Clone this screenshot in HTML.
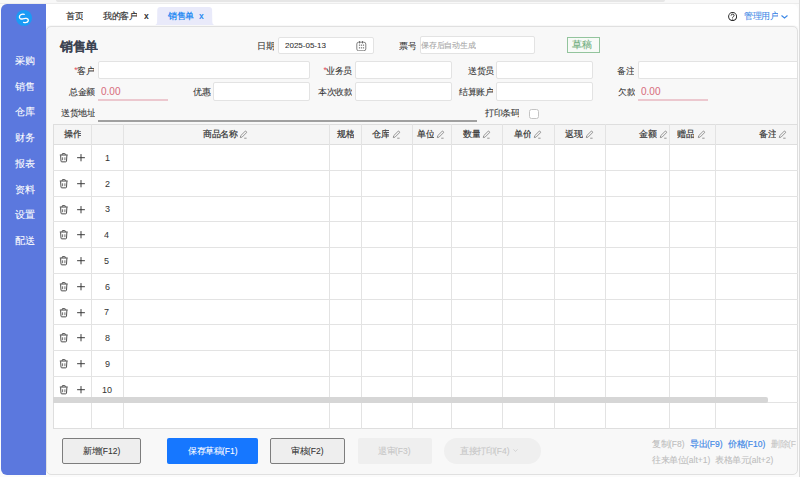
<!DOCTYPE html>
<html><head><meta charset="utf-8">
<style>
*{box-sizing:border-box;margin:0;padding:0}
html,body{width:800px;height:477px;overflow:hidden;background:#fbfbfb;font-family:"Liberation Sans",sans-serif;color:#333}
.a{position:absolute}
.t{position:absolute;white-space:nowrap;line-height:1;transform:scale(0.25);transform-origin:0 0}
.hl{height:1px;background:#e3e3e3}
.vl{width:1px;background:#e3e3e3}
.ic{line-height:0}
.inp{position:absolute;background:#fff;border:1px solid #e3e3e3;border-radius:2px}
.btn{position:absolute;top:437.9px;height:25.9px}
.b1{background:#eeeeee;border:1px solid #7d7d7d;border-radius:2px}
</style></head>
<body>
<div class="a" style="left:0;top:0;width:800px;height:4px;background:#f8f8f8;border-bottom:1px solid #ececec"></div>
<div class="a" style="left:56px;top:0;width:609px;height:2px;background:#e6e6e6;border-radius:0 0 2px 2px"></div>
<div class="a" style="left:1px;top:3.9px;width:45px;height:471px;background:#5b78de;border-radius:6px 0 0 6px"></div>
<div class="a" style="left:15.6px;top:10px;width:16.2px;height:16.2px;border-radius:50%;background:#1a9bf5"></div>
<svg class="a" style="left:15.6px;top:10px" width="16.2" height="16.2" viewBox="0 0 16.2 16.2"><path d="M8.2 4.3 C5.5 3.7 3.2 5.2 3.4 7.2 C3.6 8.9 5.2 9.3 6.8 8.9 L9.6 8.4 C11.4 8.1 12.7 9.3 12.2 11 C11.8 12.4 10.3 12.9 7.6 12.4" fill="none" stroke="#fff" stroke-width="1.35" stroke-linecap="round"/></svg>
<div class="a" style="left:46px;top:4px;width:752px;height:22.2px;background:#fff;border-radius:0 6px 0 0"></div>
<div class="a" style="left:799px;top:0;width:1px;height:477px;background:#dcdcdc"></div>
<svg class="a" style="left:150px;top:0" width="70" height="27" viewBox="0 0 70 27"><path d="M5.4 25 Q7 24.6 7.1 22 L7.3 10 Q7.4 7 10.4 7 L59 7 Q62 7 62.1 10 L62.3 22 Q62.4 24.6 64.2 25 Z" fill="#e9eafa"/></svg>
<svg class="a" style="left:728px;top:11.6px" width="9.2" height="9.2" viewBox="0 0 10 10"><circle cx="5" cy="5" r="4.35" fill="none" stroke="#2b2b2b" stroke-width="1.1"/><path d="M3.4 3.9 Q3.4 2.4 5 2.4 Q6.6 2.4 6.6 3.8 Q6.6 4.7 5.6 5.1 Q5 5.4 5 6.2" fill="none" stroke="#2b2b2b" stroke-width="1.05"/><circle cx="5" cy="7.6" r="0.65" fill="#2b2b2b"/></svg>
<svg class="a" style="left:781px;top:15px" width="7" height="3.5" viewBox="0 0 7 3.5"><path d="M0.5 0.5 L3.5 3 L6.5 0.5" fill="none" stroke="#3b87e6" stroke-width="1.1"/></svg>
<div class="a" style="left:46px;top:26.2px;width:752px;height:448.8px;background:#f8f8f8;border:1px solid #e0e0e0;border-radius:5px;box-shadow:0 -1px 1px rgba(0,0,0,0.03)"></div>

<div class="inp" style="left:278.2px;top:36.6px;width:96px;height:17.6px"></div>
<svg class="a" style="left:356px;top:40.5px" width="10.5" height="10.5" viewBox="0 0 10.5 10.5"><rect x="0.8" y="1.2" width="9" height="8.6" rx="1.9" fill="none" stroke="#7a7a7a" stroke-width="0.95"/><path d="M3.6 0.1 V2.4 M6.5 0.1 V2.4" stroke="#666" stroke-width="1"/><g fill="#666"><rect x="2.9" y="3.6" width="1.2" height="1.1"/><rect x="4.9" y="3.6" width="1.2" height="1.1"/><rect x="6.9" y="3.6" width="1.2" height="1.1"/><rect x="2.9" y="6.3" width="1.2" height="1.1"/><rect x="4.9" y="6.3" width="1.2" height="1.1"/><rect x="6.9" y="6.3" width="1.2" height="1.1"/></g></svg>
<div class="inp" style="left:419.5px;top:36.2px;width:115.5px;height:18px"></div>
<div class="a" style="left:566.9px;top:37.1px;width:33.1px;height:15.9px;border:1.2px solid #93c49d;background:#f7faf7"></div>

<div class="inp" style="left:97.8px;top:61px;width:211.9px;height:17.6px"></div>
<div class="inp" style="left:355.2px;top:61px;width:96.8px;height:17.6px"></div>
<div class="inp" style="left:496.2px;top:61px;width:96.8px;height:17.6px"></div>
<div class="inp" style="left:638px;top:61px;width:159px;height:17.6px;border-right:none;border-radius:2px 0 0 2px"></div>
<div class="inp" style="left:213.3px;top:82.3px;width:96.4px;height:18.3px"></div>
<div class="inp" style="left:355.2px;top:82.3px;width:96.8px;height:18.3px"></div>
<div class="inp" style="left:496.2px;top:82.3px;width:96.8px;height:18.3px"></div>
<div class="a" style="left:97.6px;top:99.3px;width:70.8px;height:1.4px;background:#ecc8cf"></div>
<div class="a" style="left:638px;top:99.3px;width:70px;height:1.4px;background:#ecc8cf"></div>
<div class="a" style="left:97.9px;top:120.2px;width:379.1px;height:1.6px;background:#a0a0a0"></div>
<div class="a" style="left:529.2px;top:109.2px;width:9.4px;height:9.4px;border:1px solid #c4c4c4;border-radius:2.5px;background:#fff"></div>
<div class="a" style="left:74.3px;top:65.9px;font-size:8.6px;color:#e04a5a;line-height:8px">*</div>
<div class="a" style="left:323.4px;top:65.9px;font-size:8.6px;color:#e04a5a;line-height:8px">*</div>

<div class="a" style="left:53px;top:124.4px;width:744.6px;height:304.6px;background:#fff;border:1px solid #dedede"></div>
<div class="a" style="left:53px;top:124.4px;width:744.6px;height:20.5px;background:#f5f5f5;border:1px solid #dedede"></div>
<div class="a hl" style="top:170px;left:53px;width:744.6px"></div>
<div class="a hl" style="top:196px;left:53px;width:744.6px"></div>
<div class="a hl" style="top:221px;left:53px;width:744.6px"></div>
<div class="a hl" style="top:247px;left:53px;width:744.6px"></div>
<div class="a hl" style="top:273px;left:53px;width:744.6px"></div>
<div class="a hl" style="top:299px;left:53px;width:744.6px"></div>
<div class="a hl" style="top:324px;left:53px;width:744.6px"></div>
<div class="a hl" style="top:350px;left:53px;width:744.6px"></div>
<div class="a hl" style="top:376px;left:53px;width:744.6px"></div>
<div class="a hl" style="top:402px;left:53px;width:744.6px"></div>
<div class="a vl" style="left:91px;top:124.4px;height:304.6px"></div>
<div class="a vl" style="left:123px;top:124.4px;height:304.6px"></div>
<div class="a vl" style="left:329px;top:124.4px;height:304.6px"></div>
<div class="a vl" style="left:361px;top:124.4px;height:304.6px"></div>
<div class="a vl" style="left:412px;top:124.4px;height:304.6px"></div>
<div class="a vl" style="left:451px;top:124.4px;height:304.6px"></div>
<div class="a vl" style="left:502px;top:124.4px;height:304.6px"></div>
<div class="a vl" style="left:554px;top:124.4px;height:304.6px"></div>
<div class="a vl" style="left:605px;top:124.4px;height:304.6px"></div>
<div class="a vl" style="left:669px;top:124.4px;height:304.6px"></div>
<div class="a vl" style="left:715px;top:124.4px;height:304.6px"></div>
<div class="a ic" style="left:238.90px;top:130.3px"><svg width="9" height="9" viewBox="0 0 9 9"><path d="M1.3 7.6 L1.7 5.7 L5.9 1.5 Q6.6 0.8 7.3 1.5 Q8 2.2 7.3 2.9 L3.1 7.1 Z" fill="none" stroke="#777" stroke-width="0.75" stroke-linejoin="round"/><path d="M5.2 8.2 H7.6" stroke="#777" stroke-width="0.75"/></svg></div>
<div class="a ic" style="left:391.90px;top:130.3px"><svg width="9" height="9" viewBox="0 0 9 9"><path d="M1.3 7.6 L1.7 5.7 L5.9 1.5 Q6.6 0.8 7.3 1.5 Q8 2.2 7.3 2.9 L3.1 7.1 Z" fill="none" stroke="#777" stroke-width="0.75" stroke-linejoin="round"/><path d="M5.2 8.2 H7.6" stroke="#777" stroke-width="0.75"/></svg></div>
<div class="a ic" style="left:435.90px;top:130.3px"><svg width="9" height="9" viewBox="0 0 9 9"><path d="M1.3 7.6 L1.7 5.7 L5.9 1.5 Q6.6 0.8 7.3 1.5 Q8 2.2 7.3 2.9 L3.1 7.1 Z" fill="none" stroke="#777" stroke-width="0.75" stroke-linejoin="round"/><path d="M5.2 8.2 H7.6" stroke="#777" stroke-width="0.75"/></svg></div>
<div class="a ic" style="left:481.90px;top:130.3px"><svg width="9" height="9" viewBox="0 0 9 9"><path d="M1.3 7.6 L1.7 5.7 L5.9 1.5 Q6.6 0.8 7.3 1.5 Q8 2.2 7.3 2.9 L3.1 7.1 Z" fill="none" stroke="#777" stroke-width="0.75" stroke-linejoin="round"/><path d="M5.2 8.2 H7.6" stroke="#777" stroke-width="0.75"/></svg></div>
<div class="a ic" style="left:532.90px;top:130.3px"><svg width="9" height="9" viewBox="0 0 9 9"><path d="M1.3 7.6 L1.7 5.7 L5.9 1.5 Q6.6 0.8 7.3 1.5 Q8 2.2 7.3 2.9 L3.1 7.1 Z" fill="none" stroke="#777" stroke-width="0.75" stroke-linejoin="round"/><path d="M5.2 8.2 H7.6" stroke="#777" stroke-width="0.75"/></svg></div>
<div class="a ic" style="left:584.90px;top:130.3px"><svg width="9" height="9" viewBox="0 0 9 9"><path d="M1.3 7.6 L1.7 5.7 L5.9 1.5 Q6.6 0.8 7.3 1.5 Q8 2.2 7.3 2.9 L3.1 7.1 Z" fill="none" stroke="#777" stroke-width="0.75" stroke-linejoin="round"/><path d="M5.2 8.2 H7.6" stroke="#777" stroke-width="0.75"/></svg></div>
<div class="a ic" style="left:658.90px;top:130.3px"><svg width="9" height="9" viewBox="0 0 9 9"><path d="M1.3 7.6 L1.7 5.7 L5.9 1.5 Q6.6 0.8 7.3 1.5 Q8 2.2 7.3 2.9 L3.1 7.1 Z" fill="none" stroke="#777" stroke-width="0.75" stroke-linejoin="round"/><path d="M5.2 8.2 H7.6" stroke="#777" stroke-width="0.75"/></svg></div>
<div class="a ic" style="left:696.90px;top:130.3px"><svg width="9" height="9" viewBox="0 0 9 9"><path d="M1.3 7.6 L1.7 5.7 L5.9 1.5 Q6.6 0.8 7.3 1.5 Q8 2.2 7.3 2.9 L3.1 7.1 Z" fill="none" stroke="#777" stroke-width="0.75" stroke-linejoin="round"/><path d="M5.2 8.2 H7.6" stroke="#777" stroke-width="0.75"/></svg></div>
<div class="a ic" style="left:777.90px;top:130.3px"><svg width="9" height="9" viewBox="0 0 9 9"><path d="M1.3 7.6 L1.7 5.7 L5.9 1.5 Q6.6 0.8 7.3 1.5 Q8 2.2 7.3 2.9 L3.1 7.1 Z" fill="none" stroke="#777" stroke-width="0.75" stroke-linejoin="round"/><path d="M5.2 8.2 H7.6" stroke="#777" stroke-width="0.75"/></svg></div>
<div class="a ic" style="left:58.5px;top:153.20px"><svg width="9.5" height="10" viewBox="0 0 9.5 10"><path d="M0.8 2 H8.7" stroke="#444" stroke-width="1"/><path d="M3.2 1.9 V1.2 Q3.2 0.45 4 0.45 H5.5 Q6.3 0.45 6.3 1.2 V1.9" fill="none" stroke="#444" stroke-width="0.9"/><path d="M1.6 2.3 L2 8.1 Q2.1 8.85 2.85 8.85 H6.65 Q7.4 8.85 7.5 8.1 L7.9 2.3" fill="none" stroke="#444" stroke-width="0.95"/><path d="M3.6 4.3 V7.2 M5.9 4.3 V7.2" stroke="#555" stroke-width="0.85"/></svg></div>
<div class="a ic" style="left:77px;top:154.20px"><svg width="8" height="8" viewBox="0 0 8 8"><path d="M4 0.1 V7.3 M0.1 3.7 H7.9" stroke="#333" stroke-width="0.95"/></svg></div>
<div class="a ic" style="left:58.5px;top:178.95px"><svg width="9.5" height="10" viewBox="0 0 9.5 10"><path d="M0.8 2 H8.7" stroke="#444" stroke-width="1"/><path d="M3.2 1.9 V1.2 Q3.2 0.45 4 0.45 H5.5 Q6.3 0.45 6.3 1.2 V1.9" fill="none" stroke="#444" stroke-width="0.9"/><path d="M1.6 2.3 L2 8.1 Q2.1 8.85 2.85 8.85 H6.65 Q7.4 8.85 7.5 8.1 L7.9 2.3" fill="none" stroke="#444" stroke-width="0.95"/><path d="M3.6 4.3 V7.2 M5.9 4.3 V7.2" stroke="#555" stroke-width="0.85"/></svg></div>
<div class="a ic" style="left:77px;top:179.95px"><svg width="8" height="8" viewBox="0 0 8 8"><path d="M4 0.1 V7.3 M0.1 3.7 H7.9" stroke="#333" stroke-width="0.95"/></svg></div>
<div class="a ic" style="left:58.5px;top:204.70px"><svg width="9.5" height="10" viewBox="0 0 9.5 10"><path d="M0.8 2 H8.7" stroke="#444" stroke-width="1"/><path d="M3.2 1.9 V1.2 Q3.2 0.45 4 0.45 H5.5 Q6.3 0.45 6.3 1.2 V1.9" fill="none" stroke="#444" stroke-width="0.9"/><path d="M1.6 2.3 L2 8.1 Q2.1 8.85 2.85 8.85 H6.65 Q7.4 8.85 7.5 8.1 L7.9 2.3" fill="none" stroke="#444" stroke-width="0.95"/><path d="M3.6 4.3 V7.2 M5.9 4.3 V7.2" stroke="#555" stroke-width="0.85"/></svg></div>
<div class="a ic" style="left:77px;top:205.70px"><svg width="8" height="8" viewBox="0 0 8 8"><path d="M4 0.1 V7.3 M0.1 3.7 H7.9" stroke="#333" stroke-width="0.95"/></svg></div>
<div class="a ic" style="left:58.5px;top:230.45px"><svg width="9.5" height="10" viewBox="0 0 9.5 10"><path d="M0.8 2 H8.7" stroke="#444" stroke-width="1"/><path d="M3.2 1.9 V1.2 Q3.2 0.45 4 0.45 H5.5 Q6.3 0.45 6.3 1.2 V1.9" fill="none" stroke="#444" stroke-width="0.9"/><path d="M1.6 2.3 L2 8.1 Q2.1 8.85 2.85 8.85 H6.65 Q7.4 8.85 7.5 8.1 L7.9 2.3" fill="none" stroke="#444" stroke-width="0.95"/><path d="M3.6 4.3 V7.2 M5.9 4.3 V7.2" stroke="#555" stroke-width="0.85"/></svg></div>
<div class="a ic" style="left:77px;top:231.45px"><svg width="8" height="8" viewBox="0 0 8 8"><path d="M4 0.1 V7.3 M0.1 3.7 H7.9" stroke="#333" stroke-width="0.95"/></svg></div>
<div class="a ic" style="left:58.5px;top:256.20px"><svg width="9.5" height="10" viewBox="0 0 9.5 10"><path d="M0.8 2 H8.7" stroke="#444" stroke-width="1"/><path d="M3.2 1.9 V1.2 Q3.2 0.45 4 0.45 H5.5 Q6.3 0.45 6.3 1.2 V1.9" fill="none" stroke="#444" stroke-width="0.9"/><path d="M1.6 2.3 L2 8.1 Q2.1 8.85 2.85 8.85 H6.65 Q7.4 8.85 7.5 8.1 L7.9 2.3" fill="none" stroke="#444" stroke-width="0.95"/><path d="M3.6 4.3 V7.2 M5.9 4.3 V7.2" stroke="#555" stroke-width="0.85"/></svg></div>
<div class="a ic" style="left:77px;top:257.20px"><svg width="8" height="8" viewBox="0 0 8 8"><path d="M4 0.1 V7.3 M0.1 3.7 H7.9" stroke="#333" stroke-width="0.95"/></svg></div>
<div class="a ic" style="left:58.5px;top:281.95px"><svg width="9.5" height="10" viewBox="0 0 9.5 10"><path d="M0.8 2 H8.7" stroke="#444" stroke-width="1"/><path d="M3.2 1.9 V1.2 Q3.2 0.45 4 0.45 H5.5 Q6.3 0.45 6.3 1.2 V1.9" fill="none" stroke="#444" stroke-width="0.9"/><path d="M1.6 2.3 L2 8.1 Q2.1 8.85 2.85 8.85 H6.65 Q7.4 8.85 7.5 8.1 L7.9 2.3" fill="none" stroke="#444" stroke-width="0.95"/><path d="M3.6 4.3 V7.2 M5.9 4.3 V7.2" stroke="#555" stroke-width="0.85"/></svg></div>
<div class="a ic" style="left:77px;top:282.95px"><svg width="8" height="8" viewBox="0 0 8 8"><path d="M4 0.1 V7.3 M0.1 3.7 H7.9" stroke="#333" stroke-width="0.95"/></svg></div>
<div class="a ic" style="left:58.5px;top:307.70px"><svg width="9.5" height="10" viewBox="0 0 9.5 10"><path d="M0.8 2 H8.7" stroke="#444" stroke-width="1"/><path d="M3.2 1.9 V1.2 Q3.2 0.45 4 0.45 H5.5 Q6.3 0.45 6.3 1.2 V1.9" fill="none" stroke="#444" stroke-width="0.9"/><path d="M1.6 2.3 L2 8.1 Q2.1 8.85 2.85 8.85 H6.65 Q7.4 8.85 7.5 8.1 L7.9 2.3" fill="none" stroke="#444" stroke-width="0.95"/><path d="M3.6 4.3 V7.2 M5.9 4.3 V7.2" stroke="#555" stroke-width="0.85"/></svg></div>
<div class="a ic" style="left:77px;top:308.70px"><svg width="8" height="8" viewBox="0 0 8 8"><path d="M4 0.1 V7.3 M0.1 3.7 H7.9" stroke="#333" stroke-width="0.95"/></svg></div>
<div class="a ic" style="left:58.5px;top:333.45px"><svg width="9.5" height="10" viewBox="0 0 9.5 10"><path d="M0.8 2 H8.7" stroke="#444" stroke-width="1"/><path d="M3.2 1.9 V1.2 Q3.2 0.45 4 0.45 H5.5 Q6.3 0.45 6.3 1.2 V1.9" fill="none" stroke="#444" stroke-width="0.9"/><path d="M1.6 2.3 L2 8.1 Q2.1 8.85 2.85 8.85 H6.65 Q7.4 8.85 7.5 8.1 L7.9 2.3" fill="none" stroke="#444" stroke-width="0.95"/><path d="M3.6 4.3 V7.2 M5.9 4.3 V7.2" stroke="#555" stroke-width="0.85"/></svg></div>
<div class="a ic" style="left:77px;top:334.45px"><svg width="8" height="8" viewBox="0 0 8 8"><path d="M4 0.1 V7.3 M0.1 3.7 H7.9" stroke="#333" stroke-width="0.95"/></svg></div>
<div class="a ic" style="left:58.5px;top:359.20px"><svg width="9.5" height="10" viewBox="0 0 9.5 10"><path d="M0.8 2 H8.7" stroke="#444" stroke-width="1"/><path d="M3.2 1.9 V1.2 Q3.2 0.45 4 0.45 H5.5 Q6.3 0.45 6.3 1.2 V1.9" fill="none" stroke="#444" stroke-width="0.9"/><path d="M1.6 2.3 L2 8.1 Q2.1 8.85 2.85 8.85 H6.65 Q7.4 8.85 7.5 8.1 L7.9 2.3" fill="none" stroke="#444" stroke-width="0.95"/><path d="M3.6 4.3 V7.2 M5.9 4.3 V7.2" stroke="#555" stroke-width="0.85"/></svg></div>
<div class="a ic" style="left:77px;top:360.20px"><svg width="8" height="8" viewBox="0 0 8 8"><path d="M4 0.1 V7.3 M0.1 3.7 H7.9" stroke="#333" stroke-width="0.95"/></svg></div>
<div class="a ic" style="left:58.5px;top:384.95px"><svg width="9.5" height="10" viewBox="0 0 9.5 10"><path d="M0.8 2 H8.7" stroke="#444" stroke-width="1"/><path d="M3.2 1.9 V1.2 Q3.2 0.45 4 0.45 H5.5 Q6.3 0.45 6.3 1.2 V1.9" fill="none" stroke="#444" stroke-width="0.9"/><path d="M1.6 2.3 L2 8.1 Q2.1 8.85 2.85 8.85 H6.65 Q7.4 8.85 7.5 8.1 L7.9 2.3" fill="none" stroke="#444" stroke-width="0.95"/><path d="M3.6 4.3 V7.2 M5.9 4.3 V7.2" stroke="#555" stroke-width="0.85"/></svg></div>
<div class="a ic" style="left:77px;top:385.95px"><svg width="8" height="8" viewBox="0 0 8 8"><path d="M4 0.1 V7.3 M0.1 3.7 H7.9" stroke="#333" stroke-width="0.95"/></svg></div>
<div class="a" style="left:53.4px;top:397px;width:714.3px;height:5.5px;background:#d6d6d6;border-radius:0 2px 2px 0"></div>

<div class="btn b1" style="left:62.3px;width:78.9px"></div>
<div class="btn" style="left:166.7px;width:91px;background:#1677ff;border-radius:2px"></div>
<div class="btn b1" style="left:270px;width:75px"></div>
<div class="btn" style="left:357.9px;width:73.7px;background:#efefef;border-radius:2px"></div>
<div class="btn" style="left:444px;width:96.8px;background:#efefef;border-radius:13px"></div>
<svg class="a" style="left:512.5px;top:449px" width="5" height="3" viewBox="0 0 5 3"><path d="M0.4 0.4 L2.5 2.4 L4.6 0.4" fill="none" stroke="#c9c9c9" stroke-width="0.7"/></svg>
<div class="a" style="left:0;top:0;width:795.5px;height:477px;overflow:hidden">
<div id="t_tab_home" class="t" style="left:66.10px;top:11.96px;font-size:34.00px;font-weight:normal;color:#333;-webkit-text-stroke:0.7px #333">首页</div>
<div id="t_tab_cust" class="t" style="left:103.49px;top:11.96px;font-size:34.00px;font-weight:normal;color:#333;-webkit-text-stroke:0.7px #333">我的客户</div>
<div id="t_tab_cust_x" class="t" style="left:143.54px;top:12.16px;font-size:34.00px;font-weight:bold;color:#333;-webkit-text-stroke:0.0px #333">x</div>
<div id="t_tab_sale" class="t" style="left:168.27px;top:11.96px;font-size:34.00px;font-weight:bold;color:#2a8bf2;-webkit-text-stroke:0.0px #2a8bf2">销售单</div>
<div id="t_tab_sale_x" class="t" style="left:198.81px;top:12.16px;font-size:34.00px;font-weight:bold;color:#2d8cf0;-webkit-text-stroke:0.0px #2d8cf0">x</div>
<div id="t_user" class="t" style="left:743.61px;top:12.42px;font-size:34.00px;font-weight:normal;color:#3b87e6;-webkit-text-stroke:0.3px #3b87e6">管理用户</div>
<div id="t_title" class="t" style="left:60.09px;top:39.67px;font-size:50.00px;font-weight:bold;color:#3b4251;-webkit-text-stroke:0.7px #3b4251">销售单</div>
<div id="t_l_date" class="t" style="left:257.33px;top:41.85px;font-size:34.00px;font-weight:normal;color:#333;-webkit-text-stroke:0.3px #333">日期</div>
<div id="t_v_date" class="t" style="left:284.60px;top:40.79px;font-size:32.00px;font-weight:normal;color:#333;-webkit-text-stroke:0.3px #333">2025-05-13</div>
<div id="t_l_no" class="t" style="left:399.19px;top:41.85px;font-size:34.00px;font-weight:normal;color:#333;-webkit-text-stroke:0.3px #333">票号</div>
<div id="t_ph" class="t" style="left:421.30px;top:40.75px;font-size:31.00px;font-weight:normal;color:#a6a6a6;-webkit-text-stroke:0.3px #a6a6a6">保存后自动生成</div>
<div id="t_draft" class="t" style="left:572.42px;top:39.36px;font-size:40.00px;font-weight:normal;color:#6dab79;-webkit-text-stroke:0.3px #6dab79">草稿</div>
<div id="t_l_cust" class="t" style="left:77.22px;top:66.55px;font-size:34.00px;font-weight:normal;color:#333;-webkit-text-stroke:0.3px #333">客户</div>
<div id="t_l_sales" class="t" style="left:325.58px;top:66.55px;font-size:34.00px;font-weight:normal;color:#333;-webkit-text-stroke:0.3px #333">业务员</div>
<div id="t_l_deliv" class="t" style="left:467.70px;top:66.55px;font-size:34.00px;font-weight:normal;color:#333;-webkit-text-stroke:0.3px #333">送货员</div>
<div id="t_l_note" class="t" style="left:617.32px;top:66.55px;font-size:34.00px;font-weight:normal;color:#333;-webkit-text-stroke:0.3px #333">备注</div>
<div id="t_l_total" class="t" style="left:69.28px;top:87.55px;font-size:34.00px;font-weight:normal;color:#333;-webkit-text-stroke:0.3px #333">总金额</div>
<div id="t_v_total" class="t" style="left:100.94px;top:85.50px;font-size:40.00px;font-weight:normal;color:#d8707f;-webkit-text-stroke:0.3px #d8707f">0.00</div>
<div id="t_l_disc" class="t" style="left:193.03px;top:87.55px;font-size:34.00px;font-weight:normal;color:#333;-webkit-text-stroke:0.3px #333">优惠</div>
<div id="t_l_recv" class="t" style="left:317.90px;top:87.55px;font-size:34.00px;font-weight:normal;color:#333;-webkit-text-stroke:0.3px #333">本次收款</div>
<div id="t_l_acct" class="t" style="left:458.91px;top:87.55px;font-size:34.00px;font-weight:normal;color:#333;-webkit-text-stroke:0.3px #333">结算账户</div>
<div id="t_l_owe" class="t" style="left:617.75px;top:87.55px;font-size:34.00px;font-weight:normal;color:#333;-webkit-text-stroke:0.3px #333">欠款</div>
<div id="t_v_owe" class="t" style="left:640.94px;top:85.50px;font-size:40.00px;font-weight:normal;color:#d8707f;-webkit-text-stroke:0.3px #d8707f">0.00</div>
<div id="t_l_addr" class="t" style="left:60.82px;top:108.88px;font-size:34.00px;font-weight:normal;color:#333;-webkit-text-stroke:0.3px #333">送货地址</div>
<div id="t_l_print" class="t" style="left:485.17px;top:109.19px;font-size:34.00px;font-weight:normal;color:#333;-webkit-text-stroke:0.3px #333">打印条码</div>
<div id="t_b_new" class="t" style="left:82.58px;top:446.77px;font-size:34.00px;font-weight:normal;color:#333;-webkit-text-stroke:0.3px #333">新增(F12)</div>
<div id="t_b_save" class="t" style="left:188.02px;top:446.77px;font-size:34.00px;font-weight:normal;color:#fff;-webkit-text-stroke:0.3px #fff">保存草稿(F1)</div>
<div id="t_b_audit" class="t" style="left:291.30px;top:446.77px;font-size:34.00px;font-weight:normal;color:#333;-webkit-text-stroke:0.3px #333">审核(F2)</div>
<div id="t_b_unaudit" class="t" style="left:378.33px;top:446.77px;font-size:34.00px;font-weight:normal;color:#c6c6c6;-webkit-text-stroke:0.3px #c6c6c6">退审(F3)</div>
<div id="t_b_print" class="t" style="left:459.51px;top:446.77px;font-size:34.00px;font-weight:normal;color:#c6c6c6;-webkit-text-stroke:0.3px #c6c6c6">直接打印(F4)</div>
<div id="t_k_copy" class="t" style="left:651.78px;top:440.21px;font-size:34.00px;font-weight:normal;color:#bdbdbd;-webkit-text-stroke:0.3px #bdbdbd">复制(F8)</div>
<div id="t_k_exp" class="t" style="left:690.00px;top:440.21px;font-size:34.00px;font-weight:normal;color:#3f88e6;-webkit-text-stroke:0.7px #3f88e6">导出(F9)</div>
<div id="t_k_price" class="t" style="left:728.49px;top:440.21px;font-size:34.00px;font-weight:normal;color:#3f88e6;-webkit-text-stroke:0.7px #3f88e6">价格(F10)</div>
<div id="t_k_del" class="t" style="left:771.40px;top:440.21px;font-size:34.00px;font-weight:normal;color:#c6c6c6;-webkit-text-stroke:0.3px #c6c6c6">删除(F8)</div>
<div id="t_k_unit" class="t" style="left:651.64px;top:456.26px;font-size:34.00px;font-weight:normal;color:#bdbdbd;-webkit-text-stroke:0.3px #bdbdbd">往来单位(alt+1)</div>
<div id="t_k_cell" class="t" style="left:714.92px;top:456.26px;font-size:34.00px;font-weight:normal;color:#bdbdbd;-webkit-text-stroke:0.3px #bdbdbd">表格单元(alt+2)</div>
<div id="t_menu0" class="t" style="left:15.45px;top:55.05px;font-size:41.00px;font-weight:normal;color:#fff;-webkit-text-stroke:0.3px #fff">采购</div>
<div id="t_menu1" class="t" style="left:15.45px;top:80.77px;font-size:41.00px;font-weight:normal;color:#fff;-webkit-text-stroke:0.3px #fff">销售</div>
<div id="t_menu2" class="t" style="left:15.45px;top:106.49px;font-size:41.00px;font-weight:normal;color:#fff;-webkit-text-stroke:0.3px #fff">仓库</div>
<div id="t_menu3" class="t" style="left:15.45px;top:132.21px;font-size:41.00px;font-weight:normal;color:#fff;-webkit-text-stroke:0.3px #fff">财务</div>
<div id="t_menu4" class="t" style="left:15.45px;top:157.93px;font-size:41.00px;font-weight:normal;color:#fff;-webkit-text-stroke:0.3px #fff">报表</div>
<div id="t_menu5" class="t" style="left:15.45px;top:183.65px;font-size:41.00px;font-weight:normal;color:#fff;-webkit-text-stroke:0.3px #fff">资料</div>
<div id="t_menu6" class="t" style="left:15.45px;top:209.37px;font-size:41.00px;font-weight:normal;color:#fff;-webkit-text-stroke:0.3px #fff">设置</div>
<div id="t_menu7" class="t" style="left:15.45px;top:235.09px;font-size:41.00px;font-weight:normal;color:#fff;-webkit-text-stroke:0.3px #fff">配送</div>
<div id="t_th0" class="t" style="left:63.70px;top:130.42px;font-size:34.00px;font-weight:normal;color:#333;-webkit-text-stroke:0.7px #333">操作</div>
<div id="t_th1" class="t" style="left:202.62px;top:130.42px;font-size:34.00px;font-weight:normal;color:#333;-webkit-text-stroke:0.7px #333">商品名称</div>
<div id="t_th2" class="t" style="left:337.09px;top:130.42px;font-size:34.00px;font-weight:normal;color:#333;-webkit-text-stroke:0.7px #333">规格</div>
<div id="t_th3" class="t" style="left:372.22px;top:130.42px;font-size:34.00px;font-weight:normal;color:#333;-webkit-text-stroke:0.7px #333">仓库</div>
<div id="t_th4" class="t" style="left:417.15px;top:130.42px;font-size:34.00px;font-weight:normal;color:#333;-webkit-text-stroke:0.7px #333">单位</div>
<div id="t_th5" class="t" style="left:462.65px;top:130.42px;font-size:34.00px;font-weight:normal;color:#333;-webkit-text-stroke:0.7px #333">数量</div>
<div id="t_th6" class="t" style="left:513.53px;top:130.42px;font-size:34.00px;font-weight:normal;color:#333;-webkit-text-stroke:0.7px #333">单价</div>
<div id="t_th7" class="t" style="left:564.62px;top:130.42px;font-size:34.00px;font-weight:normal;color:#333;-webkit-text-stroke:0.7px #333">返现</div>
<div id="t_th8" class="t" style="left:638.77px;top:130.42px;font-size:34.00px;font-weight:normal;color:#333;-webkit-text-stroke:0.7px #333">金额</div>
<div id="t_th9" class="t" style="left:677.30px;top:130.42px;font-size:34.00px;font-weight:normal;color:#333;-webkit-text-stroke:0.7px #333">赠品</div>
<div id="t_th10" class="t" style="left:758.60px;top:130.42px;font-size:34.00px;font-weight:normal;color:#333;-webkit-text-stroke:0.7px #333">备注</div>
<div id="t_rn0" class="t" style="left:104.72px;top:152.90px;font-size:36.00px;font-weight:normal;color:#333;-webkit-text-stroke:0.0px #333">1</div>
<div id="t_rn1" class="t" style="left:105.02px;top:178.65px;font-size:36.00px;font-weight:normal;color:#333;-webkit-text-stroke:0.0px #333">2</div>
<div id="t_rn2" class="t" style="left:104.71px;top:204.40px;font-size:36.00px;font-weight:normal;color:#333;-webkit-text-stroke:0.0px #333">3</div>
<div id="t_rn3" class="t" style="left:104.43px;top:230.15px;font-size:36.00px;font-weight:normal;color:#333;-webkit-text-stroke:0.0px #333">4</div>
<div id="t_rn4" class="t" style="left:104.44px;top:255.90px;font-size:36.00px;font-weight:normal;color:#333;-webkit-text-stroke:0.0px #333">5</div>
<div id="t_rn5" class="t" style="left:104.76px;top:281.65px;font-size:36.00px;font-weight:normal;color:#333;-webkit-text-stroke:0.0px #333">6</div>
<div id="t_rn6" class="t" style="left:104.21px;top:307.40px;font-size:36.00px;font-weight:normal;color:#333;-webkit-text-stroke:0.0px #333">7</div>
<div id="t_rn7" class="t" style="left:104.68px;top:333.15px;font-size:36.00px;font-weight:normal;color:#333;-webkit-text-stroke:0.0px #333">8</div>
<div id="t_rn8" class="t" style="left:104.61px;top:358.90px;font-size:36.00px;font-weight:normal;color:#333;-webkit-text-stroke:0.0px #333">9</div>
<div id="t_rn9" class="t" style="left:102.48px;top:384.65px;font-size:36.00px;font-weight:normal;color:#333;-webkit-text-stroke:0.0px #333">10</div>
</div>
</body></html>
